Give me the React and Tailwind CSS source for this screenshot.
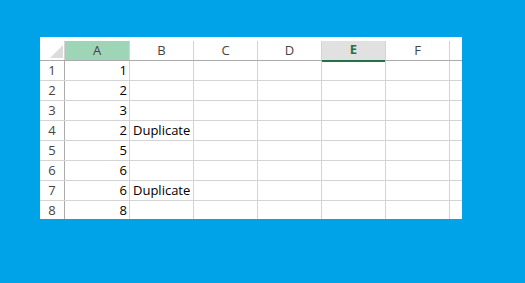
import React from "react";

const cols = ["A", "B", "C", "D", "E", "F"];

const rows = [
  { a: "1", b: "" },
  { a: "2", b: "" },
  { a: "3", b: "" },
  { a: "2", b: "Duplicate" },
  { a: "5", b: "" },
  { a: "6", b: "" },
  { a: "6", b: "Duplicate" },
  { a: "8", b: "" },
];

// column widths including the right border line
const widths = {
  A: "w-[65px]",
  B: "w-[64px]",
  C: "w-[64px]",
  D: "w-[64px]",
  E: "w-[64px]",
  F: "w-[64px]",
};

const HeaderCell = ({ col }) => {
  if (col === "A") {
    return (
      <div className="w-[65px] h-[19px] bg-[#9fd5b7] border-r border-[#d4d4d4] flex items-center justify-center text-[#444]">
        A
      </div>
    );
  }
  if (col === "E") {
    return (
      <div className="w-[64px] h-[21px] bg-[#e1e1e1] border-b-2 border-b-[#217346] border-r border-r-[#d4d4d4] flex items-center justify-center font-bold text-[#217346] pb-[2px]">
        E
      </div>
    );
  }
  return (
    <div
      className={`${widths[col]} h-[19px] border-r border-[#d4d4d4] flex items-center justify-center text-[#444]`}
    >
      {col}
    </div>
  );
};

const App = () => {
  return (
    <div
      className="w-[525px] h-[283px] bg-[#00a2e8] pt-[37px] pl-[40px] overflow-hidden"
      style={{ fontFamily: '"Open Sans", "Noto Sans", sans-serif' }}
    >
      <div className="w-[422px] h-[182px] bg-white pt-[4px] overflow-hidden text-[13px] leading-none">
        {/* column headers */}
        <div className="flex h-[20px] border-b border-[#ababab] items-start">
          <div className="w-[25px] h-[19px] border-r border-[#d4d4d4] relative">
            <svg
              width="13"
              height="13"
              viewBox="0 0 13 13"
              className="absolute right-[1px] bottom-[2px]"
            >
              <polygon points="13,0 13,13 0,13" fill="#dcdcdc" />
            </svg>
          </div>
          {cols.map((c) => (
            <HeaderCell key={c} col={c} />
          ))}
        </div>

        {/* data rows */}
        {rows.map((r, i) => (
          <div key={i} className="flex h-[20px] border-b border-[#d4d4d4]">
            <div className="w-[25px] h-[19px] border-r border-[#ababab] flex items-center justify-center text-[#444]">
              {i + 1}
            </div>
            <div className="w-[65px] h-[19px] border-r border-[#d4d4d4] flex items-center justify-end pr-[2px] text-black">
              {r.a}
            </div>
            <div className="w-[64px] h-[19px] border-r border-[#d4d4d4] flex items-center pl-[3px] text-black whitespace-nowrap">
              {r.b}
            </div>
            <div className="w-[64px] h-[19px] border-r border-[#d4d4d4]" />
            <div className="w-[64px] h-[19px] border-r border-[#d4d4d4]" />
            <div className="w-[64px] h-[19px] border-r border-[#d4d4d4]" />
            <div className="w-[64px] h-[19px] border-r border-[#d4d4d4]" />
          </div>
        ))}
      </div>
    </div>
  );
};

export default App;
